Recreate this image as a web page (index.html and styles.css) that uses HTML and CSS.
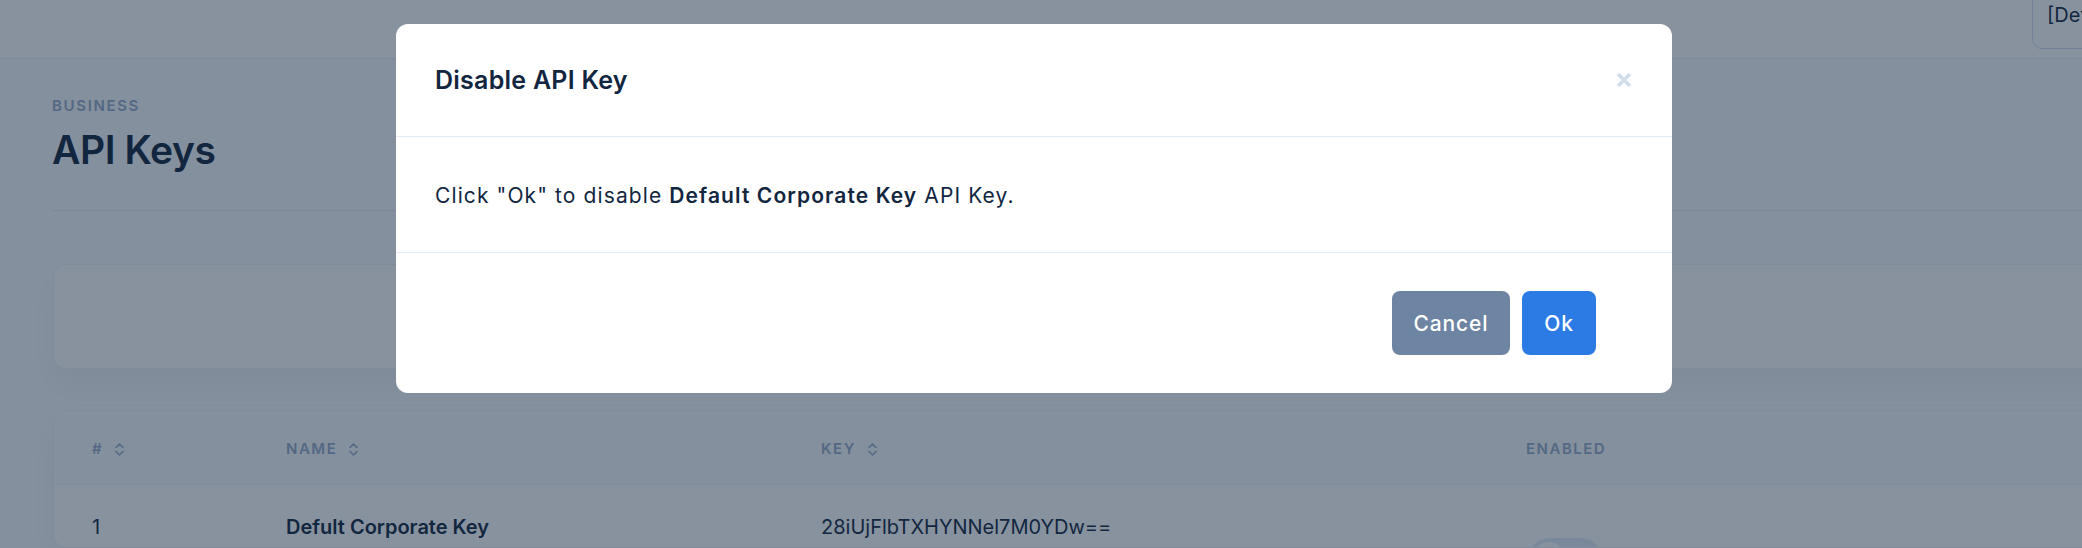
FILE: index.html
```html
<!DOCTYPE html>
<html lang="en">
<head>
<meta charset="utf-8">
<title>API Keys</title>
<link rel="stylesheet" href="styles.css">
</head>
<body>
<div class="page">
  <nav class="navbar">
    <div class="nav-select">[Default Corporate Key]</div>
  </nav>
  <main class="main">
    <header class="header">
      <div class="pretitle">Business</div>
      <h1 class="title">API Keys</h1>
    </header>
    <section class="card card-filter"></section>
    <section class="card card-table">
      <div class="trow thead">
        <div class="cell">#<svg class="sort" viewBox="0 0 11 15"><path d="M2 5.5 L5.5 2 L9 5.5 M2 9.5 L5.5 13 L9 9.5"/></svg></div>
        <div class="cell">Name<svg class="sort" viewBox="0 0 11 15"><path d="M2 5.5 L5.5 2 L9 5.5 M2 9.5 L5.5 13 L9 9.5"/></svg></div>
        <div class="cell">Key<svg class="sort" viewBox="0 0 11 15"><path d="M2 5.5 L5.5 2 L9 5.5 M2 9.5 L5.5 13 L9 9.5"/></svg></div>
        <div class="cell">Enabled</div>
      </div>
      <div class="trow tbody">
        <div class="cell">1</div>
        <div class="cell strong">Defult Corporate Key</div>
        <div class="cell">28iUjFlbTXHYNNel7M0YDw==</div>
        <div class="cell"><span class="switch"><span class="knob"></span></span></div>
      </div>
    </section>
  </main>
</div>

<div class="backdrop"></div>
<div class="modal">
  <div class="modal-header">
    <h4 class="modal-title">Disable API Key</h4>
    <button class="close" type="button" aria-label="Close">
      <svg viewBox="0 0 16 16"><path d="M2 2 L14 14 M14 2 L2 14"/></svg>
    </button>
  </div>
  <div class="modal-body">
    <p>Click "Ok" to disable <strong>Default Corporate Key</strong> API Key.</p>
  </div>
  <div class="modal-footer">
    <button class="btn btn-secondary" type="button">Cancel</button>
    <button class="btn btn-primary" type="button">Ok</button>
  </div>
</div>
</body>
</html>
```
FILE: styles.css
```css
* { box-sizing: border-box; }

html, body {
  margin: 0;
  padding: 0;
}

body {
  width: 2082px;
  height: 548px;
  overflow: hidden;
  background: #f9fbfd;
  color: #12263f;
  font-family: Inter, "Noto Sans", "Liberation Sans", sans-serif;
  font-size: 20px;
  line-height: 1.5;
  position: relative;
}

.page {
  width: 2082px;
}

/* navbar */
.navbar {
  height: 59px;
  background: #fff;
  border-bottom: 1px solid #e3ebf6;
  display: flex;
  justify-content: flex-end;
  align-items: flex-end;
  padding-bottom: 9px;
}

.nav-select {
  flex: none;
  width: 300px;
  height: 64px;
  margin-right: -250px;
  border: 1px solid #d2ddec;
  border-radius: 10px;
  padding: 14px 0 0 14px;
  font-size: 20px;
  line-height: 1.5;
  white-space: nowrap;
  color: #12263f;
}

/* main */
.main {
  padding-left: 52px;
  margin-right: -200px;
}

.header {
  padding-top: 37px;
  padding-bottom: 34px;
  border-bottom: 1px solid #e3ebf6;
}

.pretitle {
  font-size: 15px;
  line-height: 20px;
  font-weight: 600;
  letter-spacing: 0.11em;
  text-transform: uppercase;
  color: #95aac9;
}

.title {
  margin: 8px 0 0;
  font-size: 39px;
  line-height: 52px;
  font-weight: 600;
  letter-spacing: -0.01em;
  color: #12263f;
}

.card {
  margin-left: 1px;
  background: #fff;
  border: 1px solid #edf2f9;
  border-radius: 13px;
  box-shadow: 0 16px 32px rgba(18, 38, 63, 0.05);
}

.card-filter {
  margin-top: 53px;
  height: 105px;
}

.card-table {
  margin-top: 41px;
  overflow: hidden;
}

.trow {
  display: grid;
  grid-template-columns: 194px 535px 705px 1fr;
}

.thead {
  height: 74px;
  padding-top: 3px;
  background: #f9fbfd;
  border-bottom: 1px solid #edf2f9;
  align-items: center;
}

.thead .cell {
  display: flex;
  align-items: center;
  gap: 11px;
  padding-left: 38px;
  font-size: 15px;
  font-weight: 600;
  letter-spacing: 0.1em;
  text-transform: uppercase;
  color: #95aac9;
}

.sort {
  width: 11px;
  height: 15px;
  fill: none;
  stroke: #95aac9;
  stroke-width: 1.6;
  stroke-linecap: round;
  stroke-linejoin: round;
}

.tbody {
  height: 62px;
}

.tbody .cell {
  padding: 27px 0 0 38px;
  font-size: 20px;
  line-height: 30px;
  color: #12263f;
}

.tbody .strong {
  font-weight: 600;
}

.switch {
  display: block;
  width: 72px;
  height: 40px;
  margin: 26px 0 0 3px;
  border-radius: 20px;
  background: #e3ebf6;
  position: relative;
}

.knob {
  position: absolute;
  left: 4px;
  top: 4px;
  width: 32px;
  height: 32px;
  border-radius: 50%;
  background: #fff;
}

/* modal */
.backdrop {
  position: absolute;
  inset: 0;
  background: rgba(18, 38, 63, 0.5);
}

.modal {
  position: absolute;
  left: 396px;
  top: 24px;
  width: 1276px;
  background: #fff;
  border-radius: 12px;
  overflow: hidden;
}

.modal-header {
  height: 113px;
  border-bottom: 1px solid #e3ebf6;
  display: flex;
  align-items: center;
  justify-content: space-between;
  padding: 0 40px 0 39px;
}

.modal-title {
  margin: 0;
  font-size: 25px;
  line-height: 1.2;
  font-weight: 600;
  letter-spacing: 0.01em;
  color: #12263f;
}

.close {
  border: 0;
  background: none;
  padding: 0;
  width: 16px;
  height: 16px;
  display: block;
}

.close svg {
  display: block;
  width: 16px;
  height: 16px;
  fill: none;
  stroke: #d2ddec;
  stroke-width: 3.8;
}

.modal-body {
  height: 115px;
  display: flex;
  align-items: center;
  padding: 0 39px;
}

.modal-body p {
  margin: 0;
  padding-top: 2px;
  font-size: 21px;
  line-height: 30px;
  letter-spacing: 1.1px;
}

.modal-body strong {
  font-weight: 600;
}

.modal-footer {
  height: 141px;
  border-top: 1px solid #e3ebf6;
  display: flex;
  align-items: center;
  justify-content: flex-end;
  gap: 12px;
  padding: 0 76px 0 39px;
}

.btn {
  height: 64px;
  padding: 0;
  border: 0;
  border-radius: 8px;
  font-family: inherit;
  font-size: 21px;
  font-weight: 500;
  letter-spacing: 0.9px;
  color: #fff;
  text-align: center;
}

.btn-secondary {
  background: #6e84a3;
  width: 118px;
}

.btn-primary {
  background: #2c7be5;
  width: 74px;
}
```
